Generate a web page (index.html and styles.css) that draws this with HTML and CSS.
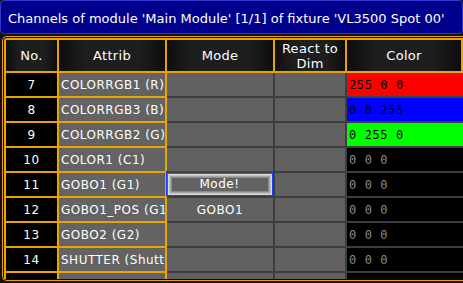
FILE: index.html
```html
<!DOCTYPE html>
<html>
<head>
    <title>Channels of module</title>
    <link rel="stylesheet" href="styles.css">
</head>
<body>
    <div class="title">Channels of module 'Main Module' [1/1] of fixture 'VL3500 Spot 00'</div>

    <div class="frame">
        <div class="sheet">
            <div class="row head">
                <div class="cell">No.</div>
                <div class="cell">Attrib</div>
                <div class="cell">Mode</div>
                <div class="cell">React to<br>Dim</div>
                <div class="cell">Color</div>
            </div>

            <div class="row">
                <div class="cell no">7</div>
                <div class="cell attrib">COLORRGB1 (R)</div>
                <div class="cell mode"></div>
                <div class="cell react"></div>
                <div class="cell color red">255 0 0</div>
            </div>
            <div class="row">
                <div class="cell no">8</div>
                <div class="cell attrib">COLORRGB3 (B)</div>
                <div class="cell mode"></div>
                <div class="cell react"></div>
                <div class="cell color blue">0 0 255</div>
            </div>
            <div class="row">
                <div class="cell no">9</div>
                <div class="cell attrib">COLORRGB2 (G)</div>
                <div class="cell mode"></div>
                <div class="cell react"></div>
                <div class="cell color green">0 255 0</div>
            </div>
            <div class="row">
                <div class="cell no">10</div>
                <div class="cell attrib">COLOR1 (C1)</div>
                <div class="cell mode"></div>
                <div class="cell react"></div>
                <div class="cell color">0 0 0</div>
            </div>
            <div class="row">
                <div class="cell no">11</div>
                <div class="cell attrib">GOBO1 (G1)</div>
                <div class="cell mode selected"><span class="btn">Mode!</span></div>
                <div class="cell react"></div>
                <div class="cell color">0 0 0</div>
            </div>
            <div class="row">
                <div class="cell no">12</div>
                <div class="cell attrib">GOBO1_POS (G1)</div>
                <div class="cell mode">GOBO1</div>
                <div class="cell react"></div>
                <div class="cell color">0 0 0</div>
            </div>
            <div class="row">
                <div class="cell no">13</div>
                <div class="cell attrib">GOBO2 (G2)</div>
                <div class="cell mode"></div>
                <div class="cell react"></div>
                <div class="cell color">0 0 0</div>
            </div>
            <div class="row">
                <div class="cell no">14</div>
                <div class="cell attrib">SHUTTER (Shutter)</div>
                <div class="cell mode"></div>
                <div class="cell react"></div>
                <div class="cell color">0 0 0</div>
            </div>
            <!-- next row only peeks in under the scroll edge -->
            <div class="row">
                <div class="cell no"></div>
                <div class="cell attrib"></div>
                <div class="cell mode"></div>
                <div class="cell react"></div>
                <div class="cell color"></div>
            </div>
        </div>
    </div>
</body>
</html>
```

FILE: styles.css
```css
body {
    margin: 0;
    width: 463px;
    height: 283px;
    overflow: hidden;
    background: #121212;
    color: #fff;
    font-family: "DejaVu Sans", sans-serif;
}

.title {
    box-sizing: border-box;
    height: 34px;
    padding: 3px 0 0 7px;
    display: flex;
    align-items: center;
    background: #00008c;
    border: 1px solid #3434d0;
    border-radius: 4px;
    font-size: 13px;
    white-space: nowrap;
}

.frame {
    box-sizing: border-box;
    height: 245px;
    margin: 2px 0 0 2px;
    padding: 1px 0 1px 1px;
    border: 1px solid #eaa400;
    border-right: none;
    border-radius: 5px 0 0 5px;
    background: #050505;
}
.sheet {
    box-sizing: border-box;
    height: 241px;
    overflow: hidden;
    border-left: 2px solid #eaa400;
    border-top: 2px solid #eaa400;
    border-top-left-radius: 3px;
}

.row {
    display: grid;
    grid-template-columns: 53px 108px 108px 72px 1fr;
    height: 25px;
}
.cell {
    display: flex;
    align-items: center;
    overflow: hidden;
    white-space: nowrap;
    font-size: 12px;
    letter-spacing: 0.5px;
    border-bottom: 2px solid #3e3e3e;
    border-right: 2px solid #3e3e3e;
}
.cell:last-child { border-right: none; }

.head { height: 33px; }
.head .cell {
    justify-content: center;
    text-align: center;
    font-size: 13px;
    letter-spacing: 0.3px;
    line-height: 15px;
    border-color: #eaa400;
    background: linear-gradient(to right, #0d0d0d, #1e1e1e 25%, #1e1e1e 75%, #0d0d0d);
}
.head .cell:last-child { border-right: 2px solid #eaa400; }

.no {
    justify-content: center;
    background: #000;
    border-color: #eaa400;
}
.attrib {
    padding-left: 2px;
    background: #636363;
    border-color: #eaa400;
}
.mode, .react {
    justify-content: center;
    background: #616161;
}
.color {
    padding-left: 2px;
    background: #000;
    color: #8a8a8a;
    font-family: "DejaVu Sans Mono", monospace;
    letter-spacing: 0.6px;
}
.color.red { background: #ff0000; color: #000; }
.color.blue { background: #0000ff; color: #000; }
.color.green { background: #00ff00; color: #000; }

.selected {
    position: relative;
    overflow: visible;
    padding: 0 1px 0 0;
}
.selected::before {
    content: "";
    position: absolute;
    top: -2px;
    left: -1px;
    right: 0;
    bottom: 0;
    border: 1px solid #1b3cff;
}
.btn {
    box-sizing: border-box;
    width: 104px;
    height: 21px;
    margin-top: -1px;
    display: flex;
    align-items: center;
    justify-content: center;
    background: #636363;
    box-shadow: inset 0 0 0 1px #dcdcdc, inset 0 0 0 2px #c2c2c2, inset 0 0 0 3px #a6a6a6, inset 0 0 0 4px #8a8a8a;
}
```
